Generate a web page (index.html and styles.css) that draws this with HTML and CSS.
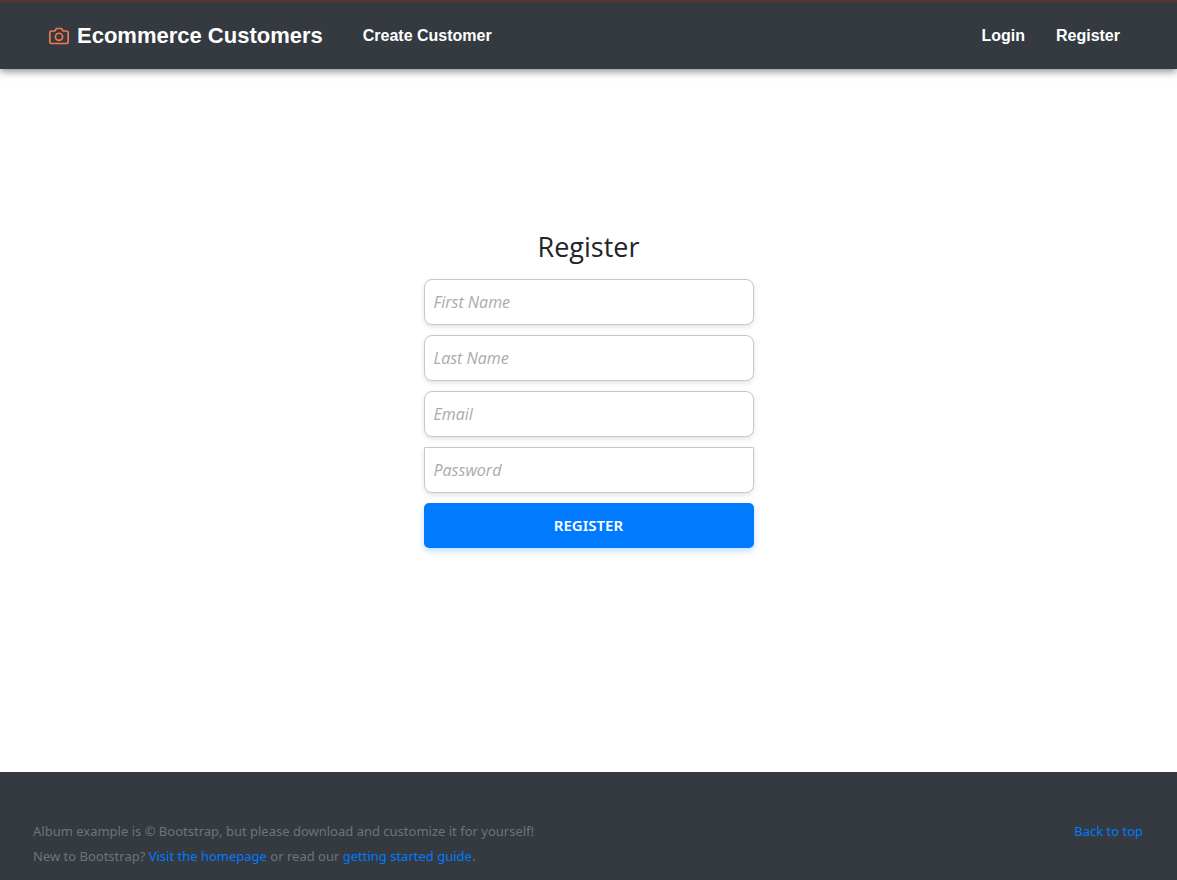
FILE: index.html
```html
<!DOCTYPE html>
<html lang="en">
<head>
<meta charset="utf-8">
<meta name="viewport" content="width=device-width, initial-scale=1">
<title>Ecommerce Customers</title>
<link rel="stylesheet" href="styles.css">
</head>
<body>
<header class="navbar">
  <a class="brand" href="#">
    <svg class="brand-icon" width="20" height="20" viewBox="0 0 24 24" fill="none" stroke="currentColor" stroke-width="2" stroke-linecap="round" stroke-linejoin="round" aria-hidden="true"><path d="M23 19a2 2 0 0 1-2 2H3a2 2 0 0 1-2-2V8a2 2 0 0 1 2-2h4l2-3h6l2 3h4a2 2 0 0 1 2 2z"/><circle cx="12" cy="13" r="4.3"/></svg>
    <span>Ecommerce Customers</span>
  </a>
  <nav class="nav-links">
    <a href="#">Create Customer</a>
    <a class="nav-login" href="#">Login</a>
    <a href="#">Register</a>
  </nav>
</header>
<main class="content">
  <form class="register-form">
    <h1 class="form-title">Register</h1>
    <input class="field" type="text" placeholder="First Name" aria-label="First Name">
    <input class="field" type="text" placeholder="Last Name" aria-label="Last Name">
    <input class="field" type="email" placeholder="Email" aria-label="Email">
    <input class="field field-last" type="password" placeholder="Password" aria-label="Password">
    <button class="submit" type="submit">REGISTER</button>
  </form>
</main>
<footer class="footer">
  <div>
    <p>Album example is © Bootstrap, but please download and customize it for yourself!</p>
    <p>New to Bootstrap? <a href="#">Visit the homepage</a> or read our <a href="#">getting started guide</a>.</p>
  </div>
  <a href="#">Back to top</a>
</footer>
</body>
</html>
```
FILE: styles.css
```css
* {
  box-sizing: border-box;
}

body {
  margin: 0;
  min-height: 100vh;
  display: flex;
  flex-direction: column;
  background: #fff;
  color: #212529;
  font-family: "Noto Sans", sans-serif;
}

a {
  color: #007bff;
  text-decoration: none;
}

.navbar {
  display: flex;
  align-items: center;
  padding: 18px 57px 17px 49px;
  background: #343a40;
  border-top: 2px solid #59352f;
  box-shadow: 0 2px 8px rgba(0, 0, 0, 0.5);
  font-family: "Liberation Sans", Arial, sans-serif;
  font-weight: 700;
}

.navbar a {
  color: #fff;
}

.navbar .brand {
  display: flex;
  align-items: center;
  gap: 8px;
  font-size: 22px;
  line-height: 32px;
}

.brand-icon {
  color: #f4774e;
}

.nav-links {
  flex: 1;
  display: flex;
  gap: 31px;
  margin-left: 40px;
  font-size: 16px;
  line-height: 24px;
}

.nav-login {
  margin-left: auto;
}

.content {
  flex: 1;
  display: flex;
  align-items: center;
  justify-content: center;
  padding: 32px 16px 96px;
}

.register-form {
  width: 100%;
  max-width: 330px;
  display: flex;
  flex-direction: column;
  gap: 10px;
}

.form-title {
  margin: 0 0 5px;
  font-family: "Open Sans", "Noto Sans", sans-serif;
  font-size: 27px;
  font-weight: 400;
  line-height: 34px;
  text-align: center;
}

.field {
  width: 100%;
  height: 46px;
  padding: 10px 9px;
  border: 1px solid #c8c8c8;
  border-radius: 8px;
  background: #fff;
  box-shadow: 0 2px 5px rgba(0, 0, 0, 0.12);
  color: #495057;
  font: 16px "Open Sans", "Noto Sans", sans-serif;
}

.field::placeholder {
  color: #aaa;
  font-style: italic;
  opacity: 1;
}

.field-last {
  border-top-left-radius: 0;
  border-top-right-radius: 0;
}

.submit {
  height: 45px;
  border: 0;
  border-radius: 5px;
  background: #007bff;
  box-shadow: 0 3px 6px rgba(0, 123, 255, 0.25);
  color: #fff;
  font: 600 15px "Noto Sans", sans-serif;
}

.footer {
  display: flex;
  justify-content: space-between;
  padding: 47px 34px 11px 33px;
  background: #343a40;
  color: #6c757d;
  font-size: 13px;
  line-height: 25px;
}

.footer p {
  margin: 0;
}
```
